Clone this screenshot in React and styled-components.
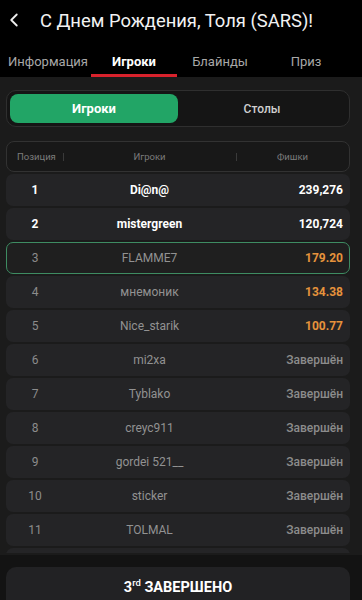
import React from "react";
import styled, { createGlobalStyle } from "styled-components";
import { ChevronLeft } from "lucide-react";

const GlobalStyle = createGlobalStyle`
  html, body {
    margin: 0;
    padding: 0;
    background: #1b1b1b;
  }
  body {
    font-family: Roboto, "Noto Sans", "Liberation Sans", sans-serif;
    color: #fff;
  }
  * {
    box-sizing: border-box;
  }
`;

const PLAYERS = [
  { pos: 1, name: "Di@n@", chips: "239,276", top: true },
  { pos: 2, name: "mistergreen", chips: "120,724", top: true },
  { pos: 3, name: "FLAMME7", chips: "179.20", prize: true, me: true },
  { pos: 4, name: "мнемоник", chips: "134.38", prize: true },
  { pos: 5, name: "Nice_starik", chips: "100.77", prize: true },
  { pos: 6, name: "mi2xa", chips: "Завершён" },
  { pos: 7, name: "Tyblako", chips: "Завершён" },
  { pos: 8, name: "creyc911", chips: "Завершён" },
  { pos: 9, name: "gordei 521__", chips: "Завершён" },
  { pos: 10, name: "sticker", chips: "Завершён" },
  { pos: 11, name: "TOLMAL", chips: "Завершён" },
];

const TABS = ["Информация", "Игроки", "Блайнды", "Приз"];

const App = () => {
  return (
    <Page>
      <GlobalStyle />
      <Header>
        <TitleBar>
          <BackButton>
            <ChevronLeft size={22} strokeWidth={2} />
          </BackButton>
          <Title>С Днем Рождения, Толя (SARS)!</Title>
        </TitleBar>
        <Tabs>
          {TABS.map((tab) => (
            <Tab key={tab} active={tab === "Игроки"}>
              {tab}
            </Tab>
          ))}
        </Tabs>
      </Header>

      <Content>
        <Segmented>
          <Segment active>Игроки</Segment>
          <Segment>Столы</Segment>
        </Segmented>

        <TableHead>
          <HeadCell>Позиция</HeadCell>
          <HeadCell center divided>
            Игроки
          </HeadCell>
          <HeadCell center divided>
            Фишки
          </HeadCell>
        </TableHead>

        <List>
          {PLAYERS.map((p) => (
            <Row key={p.pos} me={p.me}>
              <Pos top={p.top}>{p.pos}</Pos>
              <Name top={p.top}>{p.name}</Name>
              <Chips top={p.top} prize={p.prize}>
                {p.chips}
              </Chips>
            </Row>
          ))}
          {/* next row peeking out under the scroll edge */}
          <Row />
        </List>
      </Content>

      <Footer>
        <ResultCard>
          3<sup>rd</sup> ЗАВЕРШЕНО
        </ResultCard>
      </Footer>
    </Page>
  );
};

export default App;

const Page = styled.div`
  width: 362px;
  height: 600px;
  overflow: hidden;
  display: flex;
  flex-direction: column;
  background: #1b1b1b;
`;

const Header = styled.div`
  background: #000;
`;

const TitleBar = styled.div`
  height: 40px;
  display: flex;
  align-items: center;
  padding-left: 3px;
`;

const BackButton = styled.div`
  width: 33px;
  display: flex;
  align-items: center;
  color: #eee;
`;

const Title = styled.div`
  margin-left: 4px;
  font-size: 18.4px;
  color: #f2f2f2;
  white-space: nowrap;
`;

const Tabs = styled.div`
  display: grid;
  grid-template-columns: repeat(4, 86px);
  padding-left: 5px;
  height: 37px;
`;

const Tab = styled.div`
  position: relative;
  display: flex;
  align-items: center;
  justify-content: center;
  font-size: 13px;
  padding-top: 5px;
  color: ${({ active }) => (active ? "#fff" : "#a8a8a8")};
  font-weight: ${({ active }) => (active ? 700 : 400)};

  &:after {
    content: "";
    display: ${({ active }) => (active ? "block" : "none")};
    position: absolute;
    left: 0;
    right: 0;
    bottom: 0;
    height: 3px;
    background: #d8222c;
  }
`;

const Content = styled.div`
  padding: 13px 12px 0 6px;
`;

const Segmented = styled.div`
  display: grid;
  grid-template-columns: 1fr 1fr;
  height: 37px;
  padding: 3px;
  border: 1px solid #2f2f2f;
  border-radius: 10px;
  background: #151515;
`;

const Segment = styled.div`
  display: flex;
  align-items: center;
  justify-content: center;
  border-radius: 8px;
  font-size: ${({ active }) => (active ? "13px" : "12px")};
  font-weight: ${({ active }) => (active ? 700 : 500)};
  color: ${({ active }) => (active ? "#fff" : "#cfcfcf")};
  background: ${({ active }) => (active ? "#22a566" : "transparent")};
`;

const TableHead = styled.div`
  margin-top: 14px;
  height: 31px;
  display: grid;
  grid-template-columns: 56px 173px 1fr;
  align-items: center;
  border: 1px solid #323232;
  border-radius: 8px;
  background: #181818;
`;

const HeadCell = styled.div`
  position: relative;
  font-size: 9.5px;
  color: #7c7c7c;
  text-align: ${({ center }) => (center ? "center" : "left")};
  padding-left: ${({ center }) => (center ? "0" : "10px")};

  &:before {
    content: "";
    display: ${({ divided }) => (divided ? "block" : "none")};
    position: absolute;
    left: 0;
    top: 2px;
    width: 1px;
    height: 8px;
    background: #3a3a3a;
  }
`;

const List = styled.div`
  margin-top: 2px;
  height: 379px;
  overflow: hidden;
  display: flex;
  flex-direction: column;
  gap: 2px;
`;

const Row = styled.div`
  flex: none;
  height: 32px;
  display: grid;
  grid-template-columns: 56px 173px 1fr;
  align-items: center;
  border-radius: 7px;
  background: ${({ me }) => (me ? "#1f1f1f" : "#242426")};
  border: 1px solid ${({ me }) => (me ? "#3e8c62" : "transparent")};
`;

const Pos = styled.div`
  text-align: center;
  font-size: 12px;
  font-weight: ${({ top }) => (top ? 700 : 400)};
  color: ${({ top }) => (top ? "#fff" : "#8c8c8c")};
`;

const Name = styled.div`
  text-align: center;
  font-size: 12px;
  font-weight: ${({ top }) => (top ? 700 : 400)};
  color: ${({ top }) => (top ? "#fff" : "#929292")};
`;

const Chips = styled.div`
  text-align: right;
  padding-right: 6px;
  font-size: 12px;
  font-weight: ${({ top, prize }) => (top || prize ? 700 : 500)};
  color: ${({ top, prize }) =>
    top ? "#fff" : prize ? "#e6933c" : "#8c8c8c"};
`;

const Footer = styled.div`
  flex: 1;
  margin-top: 2px;
  padding: 12px 12px 0 6px;
  background: #131313;
`;

const ResultCard = styled.div`
  height: 56px;
  padding-top: 12px;
  border-radius: 10px;
  background: #222224;
  text-align: center;
  font-size: 14.5px;
  font-weight: 700;
  color: #fff;

  sup {
    font-size: 9.5px;
    font-weight: 500;
    vertical-align: 6px;
    line-height: 0;
  }
`;
